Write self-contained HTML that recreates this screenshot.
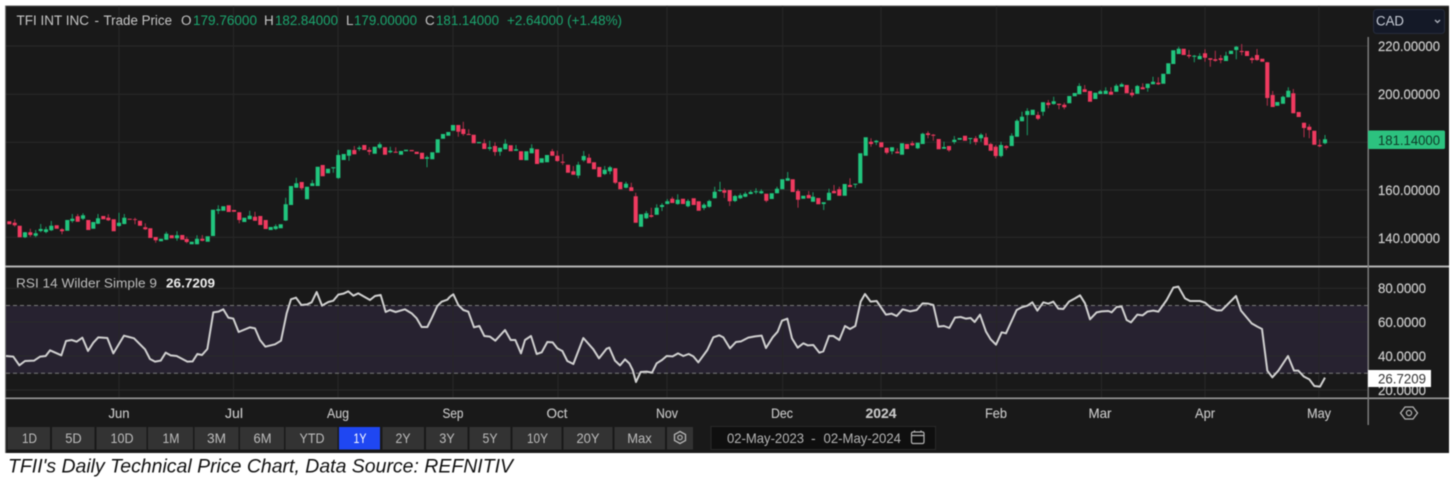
<!DOCTYPE html>
<html><head><meta charset="utf-8"><title>TFII Daily Technical Price Chart</title>
<style>
html,body{margin:0;padding:0;background:#fff;width:1454px;height:482px;overflow:hidden}
svg{display:block;filter:blur(.45px)}
text{font-family:"Liberation Sans",sans-serif}
.ax{font-size:13.5px;fill:#cfcfcf;stroke:#cfcfcf;stroke-width:.15px}
.xl{font-size:14px;fill:#c8c8c8;text-anchor:middle;stroke:#c8c8c8;stroke-width:.12px}
.bt{font-size:14px;fill:#bcbcbc;text-anchor:middle}
.g{fill:#1ba66f}.l{fill:#c6c6c6}
</style></head><body>
<svg width="1454" height="482" viewBox="0 0 1454 482" xmlns="http://www.w3.org/2000/svg">
<rect width="1454" height="482" fill="#fff"/>
<rect x="5" y="5.5" width="1444" height="447.5" fill="#191919"/>
<rect x="5" y="5.5" width="1444" height="1" fill="#555"/>
<rect x="5" y="5.5" width="1" height="447.5" fill="#777"/>

<!-- RSI band -->
<rect x="6" y="305.5" width="1362" height="68" fill="#272230"/>

<!-- grid -->
<path d="M6 46H1368M6 94.3H1368M6 142.3H1368M6 190H1368M6 237.3H1368M6 288.3H1368M6 322H1368M6 356H1368M6 390H1368" stroke="#2a2a2a" stroke-width="1" fill="none"/>
<path d="M119 6V398M233.5 6V398M338 6V398M453 6V398M558 6V398M667 6V398M782.7 6V398M881 6V398M996.6 6V398M1101.5 6V398M1205 6V398M1318.8 6V398" stroke="#272727" stroke-width="1" fill="none"/>
<path d="M6 305.5H1368M6 373.3H1368" stroke="#7a7a7a" stroke-width="1" stroke-dasharray="4 3" fill="none"/>

<!-- wicks -->
<path fill="none" stroke="#1b9c66" stroke-width="1" d="M35.7 230V237.3M40.7 224V232.3M46 226.7V233.3M51.3 221V231M25 232V238M72.3 214V222.7M83 213.3V220M98 214V224M119 212.7V226.7M124.3 214V224.3M166.3 231.7V240M177 231.3V240.7M197 235.3V244.3M218.3 205.3V214M249.7 210.7V219.3M275.7 224.3V230M285.7 197.7V221M296.3 177.7V187.7M312.3 180V186M333.3 167.3V172.7M338.3 150V179M349 149.7V160.7M359.3 145.7V151M379.7 142.3V149M390.3 146.7V153.3M427 155.7V167.3M489.7 140.7V150.7M500 147.7V155.7M505.3 139.3V149.3M516 145V150.7M531.7 144.3V153.3M578.3 161.7V178.3M583.7 151V161.7M604.7 166V175M610 166V174.3M626 181.7V188.3M646.3 211V219M656.7 204.3V214.7M662 203.3V211M667.3 199V204.3M677.7 194.3V204.7M688 199.3V207.3M704 203.3V210M709.3 199.7V207.7M714.7 186.7V198.3M720 181.7V191.7M735 195V202M740.3 193.3V199M745.3 191.7V197.3M750.7 190.3V194.3M756 188.3V194M761.3 189.3V194M777 186.7V193.3M787.7 172V180.7M813 192.3V201.7M823.7 202.3V210M829 188.7V200.3M855.3 183.7V188M876.3 140V145M892 147.3V154.3M917.7 142.7V149M922.7 132.7V144M944 141.7V148.7M954.3 136V144M970.3 138V144M981 133.3V141.7M1001 141.7V157.3M1011.7 133.3V146M1017 119.3V136.7M1022 111.7V121.3M1027.3 108.3V135.3M1043 102.3V115.7M1053.7 96.7V104.7M1079.3 83.3V94.3M1100.3 90V94M1105.7 87.3V94M1116.3 84V91.7M1121.7 82.7V86.7M1137.3 85V93.7M1147.7 83.7V91.7M1153 76.7V84.3M1178.7 46.7V54M1194.3 55V62.3M1199.7 53.3V59.3M1226 51.7V61M1236.3 46V59.3M1283 95.7V103.7M1288.3 87.3V97.3M1325 135V144.3"/>
<path fill="none" stroke="#b32f4c" stroke-width="1" d="M14.7 219.3V226.7M30.3 228.7V236.7M62 228.3V234.3M77.7 214V221.7M108.3 214.3V221M135 217.7V224.3M145.3 223.3V230M155.7 237V242.7M186.7 236.7V243.3M202.3 235V241.3M239.3 212.3V223.3M255 211.7V220.7M301.7 182V190M354.3 146V154.3M369.3 147.3V155M395.7 147.3V152.7M458.3 125V136.7M463.3 121.7V135.7M468.7 129.3V135M484.3 139.3V149M495 142.3V155.7M552.3 149V155.7M557.3 150.7V161.7M562.7 154V165M573.3 166V174.7M589 154V163.3M615.3 168.3V184M631.3 182.7V191M635.7 192.7V222.7M651.3 207.7V217.7M672.3 196.7V203M724.3 188.3V198M729.7 190V206M766.3 193.7V202.3M798 189.3V207.7M808.7 191V198.3M834 185V193.3M839.3 186.7V195.7M850 178.3V187M871 138.3V146.7M886.7 147.7V154.3M897.3 148.3V153.3M912.3 141V146M928 131.3V138.3M933.3 134V140.7M949 146V151.7M975.7 136V145M986 133.3V145.3M990.7 142.7V150.7M995.7 145V158.3M1006.3 145V150M1038 111.7V120M1048.3 100V108.3M1059 103.7V109.3M1064.3 102.7V109.3M1084.7 85V92M1111 87.3V94.7M1132 89.3V97.3M1142.7 83.3V89.3M1158.3 77.3V85M1189 50V58.3M1205 49.3V61.7M1210.3 58.3V66.7M1215.3 50.7V61.7M1220.7 55V63.3M1241.7 44V55.3M1252 56.7V63.3M1257 49V60.7M1267.3 62V105.7M1272.7 91V107M1293.3 89V113.3M1304 122.7V137.3M1309.3 124.3V138.3M1319.7 139.3V147.3"/>

<!-- green bodies -->
<path fill="none" stroke="#21c57e" stroke-width="4.1" d="M25 232.3V237.3M35.7 233.3V235.7M40.7 229V231M46 229.3V232M51.3 225.7V230.3M67.3 220V230.7M72.3 218.7V221M83 215.3V218.7M93.3 222V228.7M98 218.3V223.7M119 222.7V226M124.3 217.7V224M161 238.7V241.3M166.3 233.7V239.7M177 235.3V238.3M191.7 241.7V244.3M197 238.7V244.3M207.7 236.3V241.7M213 209.7V236M218.3 209.3V210.7M223.3 206.3V210.7M244.3 217.7V222M249.7 215.7V219.3M270.7 227V230M275.7 226.3V229M280.7 224.3V228.3M285.7 204.3V220.5M291 186V205M296.3 183.3V187.7M307 186.7V199.3M312.3 183.3V186M317.7 166.7V186M328 168.7V173.3M333.3 167.3V168.3M338.3 155V178M343.7 154V160M349 149.7V155.7M359.3 147.7V149M374.7 146.7V153.7M379.7 144.3V147.7M390.3 150.7V152.3M401 151V154.7M406 149.7V151.3M427 157.3V158.7M432.3 152.3V159.3M437.7 139.3V152.7M443 134V138.7M448.3 132V135.7M453 125V130.7M479 142V143.3M489.7 147.3V148.7M500 147.7V151.7M505.3 143.7V149.3M516 149.3V150.7M526.3 151.3V160.3M531.7 148.3V153.3M541.7 158.3V162.7M547 155V162.3M578.3 164.7V175.5M583.7 156V160.3M604.7 169.7V174M610 167.3V171.3M626 183.7V187.7M641 214.3V226.7M646.3 213.3V218.3M656.7 207.7V214.7M662 205V207M667.3 201.3V204M677.7 199.7V204M688 201V206.3M704 204.7V208M709.3 201V206.7M714.7 191.7V198.3M720 190V191M735 196V201M740.3 195.3V198.3M745.3 193.7V196.7M750.7 192V194M756 191.3V192.3M761.3 191.3V193.3M771.7 193.3V199M777 188.7V193.3M782.3 179.3V189.3M787.7 178.3V180.7M803.3 195.7V198.7M813 196.7V201.7M823.7 202.3V204M829 192.7V200.3M844.7 184V195.7M855.3 183.7V184.7M860.3 153.3V183.3M865.7 137.3V155.8M876.3 140.7V142.3M892 147.3V151.3M902 143.3V154.7M917.7 142.7V148.3M922.7 133.7V144M944 147V148.7M954.3 139.7V142M959.7 138V139.7M970.3 138V139M981 134.7V138.3M1001 145V156M1011.7 135.7V146M1017 120.7V136.7M1022 116.7V121.3M1027.3 111V115M1032.7 109.7V115M1043 102.3V111.7M1053.7 101.3V104M1069.3 96V103.3M1074.7 93V96.3M1079.3 86V94.3M1095.3 92.7V99M1100.3 91.3V94M1105.7 90.7V94M1116.3 85.7V91.7M1121.7 84.3V86.7M1137.3 86V93.7M1147.7 83.7V88M1153 81.7V84.3M1163.3 73.7V83.7M1168.3 63.3V74M1173.3 50.3V64M1178.7 48.7V54M1194.3 55.7V56.7M1199.7 56V59.3M1226 55.7V61M1231 50.7V54M1236.3 46.7V50M1277.3 102V105.7M1283 96.7V103.7M1288.3 90.7V97.3M1325 139.3V143.3"/>

<!-- red bodies -->
<path fill="none" stroke="#f03a60" stroke-width="4.1" d="M9.3 221.3V224.3M14.7 222.7V225.3M19.7 225.7V237.3M30.3 232.3V235M56.7 225.3V228.7M62 229.3V231.3M77.7 216.3V221.7M88.3 220V230M103.3 216V219.3M108.3 217.7V220.3M113.7 219.3V231.3M129.7 218.7V219.7M135 219.3V220M140 220.7V225.7M145.3 227.3V229.3M150.3 228.3V238M155.7 237V240.3M171.7 235.3V238.3M182.3 235V239.7M186.7 239V242M202.3 238.7V240.7M228.7 205.3V212M234 210V211.7M239.3 212.3V220M255 216.7V220.7M260.3 216V225M265.7 220V229M301.7 182V188.3M322.7 165V176.3M354.3 150V154.3M364.3 145V150M369.3 150V151.7M385 147.3V154.7M395.7 151.7V152.7M411.7 150V151.3M416.7 151.7V154M422 152.7V159M458.3 125V131.7M463.3 129V134M468.7 134V135M473.7 134.7V143.3M484.3 143.3V149M495 146V152M510.7 145.3V151.3M521 151.3V160M537 149.3V164M552.3 151.3V155.7M557.3 155.7V161M562.7 161.7V162.7M568 164.7V172.7M573.3 171.3V174.7M589 157.7V163.3M594 162.3V169.3M599.3 167V177M615.3 168.3V182.7M620.3 182V189.3M631.3 187.3V191M635.7 196.3V222.7M651.3 215.3V216.7M672.3 198.7V203M683 198.7V204M693.7 198.3V205M698.7 201.3V210.7M724.3 190.3V192.7M729.7 190V201.3M766.3 193.7V200.7M792.7 179.3V192M798 191V199.7M808.7 195V198.3M818.3 198V204.3M834 191V193.3M839.3 189.3V195.7M850 185V187M871 141.7V144M881.3 142.3V147.3M886.7 147.7V152.7M897.3 151.7V153.3M907 144V149M912.3 143.3V145.3M928 133.3V135M933.3 134.7V135.7M938.7 139V149.3M949 146V150.3M965 135.7V140.7M975.7 138.3V142M986 137.3V145.3M990.7 144V150.7M995.7 146.7V156M1006.3 146V148M1038 115V118.7M1048.3 102.7V105M1059 103.7V105M1064.3 104.7V107.3M1084.7 89.3V92M1090 91V101.7M1111 91.7V94.7M1126.7 85V93.3M1132 92.7V95.3M1142.7 87.3V89.3M1158.3 82.7V84.3M1183.7 48.7V55M1189 55V56.3M1205 53.3V57.7M1210.3 58.3V59.7M1215.3 59.3V60.7M1220.7 58.3V60M1241.7 51V52M1247 51V56M1252 58.3V60M1257 55V60M1262.3 58.7V61.7M1267.3 62.3V98M1272.7 95V107M1293.3 93.3V113.3M1298.7 112V117M1304 122.7V128M1309.3 126.7V130M1314.3 130.7V144.7M1319.7 145V146.3"/>

<!-- separators -->
<rect x="5" y="265.5" width="1444" height="2" fill="#b4b4b4"/>
<rect x="5" y="397.5" width="1363" height="1.6" fill="#9a9a9a"/>
<rect x="1368" y="397.5" width="81" height="1.6" fill="#9a9a9a"/>
<rect x="1367.5" y="37" width="1.4" height="388" fill="#808080"/>

<!-- RSI line -->
<g fill="none" stroke="#d0d0d0" stroke-width="6" stroke-linejoin="round">
<polyline transform="translate(0 280) scale(.33333)" points="18,228 40,230 58,256 75,243 102,242 120,230 137,228 150,211 184,226 198,183 215,180 230,185 247,173 264,213 280,188 295,172 322,174 340,220 372,167 402,175 435,208 450,237 465,245 482,242 497,218 512,226 530,228 562,245 578,244 592,222 606,225 622,207 640,97 655,95 670,88 685,113 700,116 716,156 750,142 765,145 780,180 796,200 825,193 843,182 860,100 873,58 888,53 904,75 922,73 935,67 950,36 966,77 985,66 1000,62 1015,44 1030,41 1045,34 1060,47 1075,40 1110,60 1125,48 1142,45 1157,96 1170,90 1187,96 1215,88 1235,100 1250,115 1265,141 1282,141 1295,115 1312,78 1325,65 1342,59 1350,50"/>
<polyline transform="translate(450 280) scale(.33333)" points="0,50 10,43 25,75 40,90 55,95 72,142 88,138 103,168 120,170 136,182 165,150 182,180 196,180 213,220 225,180 243,168 260,222 275,217 292,186 308,187 322,205 337,213 352,243 370,252 400,174 430,208 447,235 470,206 478,203 495,242 510,256 525,238 538,250 548,270 558,306 572,276 590,275 606,278 620,250 636,240 650,228 668,229 684,220 700,228 716,222 730,229 745,247 772,210 790,172 808,166 820,172 840,205 858,186 873,184 895,173 915,169 935,167 948,204 968,172 983,155 996,122 1012,116 1026,175 1043,203 1060,190 1073,196 1090,195 1108,218 1120,214 1137,168 1150,168 1168,180 1185,138 1200,147 1216,138 1232,65 1245,42 1262,65 1280,63 1308,104 1325,101 1340,108 1350,97"/>
<polyline transform="translate(900 280) scale(.33333)" points="0,97 8,88 30,94 50,90 68,70 85,71 100,75 115,140 132,138 148,144 165,113 182,111 198,116 212,114 224,126 240,104 258,155 272,178 288,194 305,157 318,160 350,90 365,82 382,77 397,67 412,92 430,67 445,71 460,65 475,86 490,87 507,65 525,55 540,46 555,70 570,118 590,97 605,94 625,93 635,97 650,81 665,80 680,120 693,127 712,104 728,106 742,95 760,92 775,95 800,60 820,23 835,20 855,55 870,63 900,63 915,68 935,85 950,91 965,91 1008,48 1023,92 1055,130 1072,140 1086,147 1102,272 1117,292 1135,272 1164,228 1182,272 1195,272 1212,290 1228,298 1243,318 1260,320 1275,293"/>
</g>

<!-- header -->
<g font-size="13.5">
<text x="16.5" y="25" class="l" textLength="72.5" lengthAdjust="spacingAndGlyphs">TFI INT INC</text>
<text x="94.5" y="25" class="l">-</text>
<text x="103.5" y="25" class="l" textLength="68.5" lengthAdjust="spacingAndGlyphs">Trade Price</text>
<text x="181" y="25" class="l">O</text>
<text x="193" y="25" class="g" textLength="64" lengthAdjust="spacingAndGlyphs">179.76000</text>
<text x="264" y="25" class="l">H</text>
<text x="275" y="25" class="g" textLength="63" lengthAdjust="spacingAndGlyphs">182.84000</text>
<text x="346" y="25" class="l">L</text>
<text x="354" y="25" class="g" textLength="63" lengthAdjust="spacingAndGlyphs">179.00000</text>
<text x="425" y="25" class="l">C</text>
<text x="436" y="25" class="g" textLength="63" lengthAdjust="spacingAndGlyphs">181.14000</text>
<text x="507" y="25" class="g" textLength="115" lengthAdjust="spacingAndGlyphs">+2.64000 (+1.48%)</text>
</g>
<text x="16" y="287.5" font-size="13" fill="#bdbdbd" textLength="141" lengthAdjust="spacingAndGlyphs">RSI 14 Wilder Simple 9</text>
<text x="166" y="287.5" font-size="13" fill="#eee" font-weight="bold" textLength="49" lengthAdjust="spacingAndGlyphs">26.7209</text>

<!-- CAD -->
<rect x="1373.5" y="9.5" width="71" height="24" rx="3" fill="#141927" stroke="#262c3c"/>
<text x="1376" y="25.5" font-size="13.5" fill="#c9ced8" textLength="28" lengthAdjust="spacingAndGlyphs">CAD</text>
<path d="M1435 20l2.5 2.5 2.5-2.5" stroke="#b0b5c0" stroke-width="1.3" fill="none"/>

<!-- price axis -->
<text class="ax" x="1378" y="51" textLength="62" lengthAdjust="spacingAndGlyphs">220.00000</text>
<text class="ax" x="1378" y="99" textLength="62" lengthAdjust="spacingAndGlyphs">200.00000</text>
<text class="ax" x="1378" y="195" textLength="62" lengthAdjust="spacingAndGlyphs">160.00000</text>
<text class="ax" x="1378" y="243" textLength="62" lengthAdjust="spacingAndGlyphs">140.00000</text>
<rect x="1368" y="130.5" width="77" height="18.5" rx="1.5" fill="#2cc27f"/>
<text x="1378" y="145" font-size="13.5" fill="#0f3a28" textLength="62" lengthAdjust="spacingAndGlyphs">181.14000</text>

<!-- rsi axis -->
<text class="ax" x="1378" y="293" textLength="48" lengthAdjust="spacingAndGlyphs">80.0000</text>
<text class="ax" x="1378" y="327" textLength="48" lengthAdjust="spacingAndGlyphs">60.0000</text>
<text class="ax" x="1378" y="361" textLength="48" lengthAdjust="spacingAndGlyphs">40.0000</text>
<text class="ax" x="1378" y="395" textLength="48" lengthAdjust="spacingAndGlyphs">20.0000</text>
<rect x="1368" y="370" width="63" height="17" fill="#fff"/>
<text x="1378" y="383.5" font-size="13.5" fill="#333" textLength="48" lengthAdjust="spacingAndGlyphs">26.7209</text>

<!-- x axis -->
<text class="xl" x="119" y="418" textLength="21" lengthAdjust="spacingAndGlyphs">Jun</text>
<text class="xl" x="234" y="418" textLength="18" lengthAdjust="spacingAndGlyphs">Jul</text>
<text class="xl" x="338" y="418" textLength="22" lengthAdjust="spacingAndGlyphs">Aug</text>
<text class="xl" x="453" y="418" textLength="21" lengthAdjust="spacingAndGlyphs">Sep</text>
<text class="xl" x="557" y="418" textLength="21" lengthAdjust="spacingAndGlyphs">Oct</text>
<text class="xl" x="667" y="418" textLength="22" lengthAdjust="spacingAndGlyphs">Nov</text>
<text class="xl" x="782" y="418" textLength="22" lengthAdjust="spacingAndGlyphs">Dec</text>
<text class="xl" x="881" y="418" font-weight="bold" textLength="31" lengthAdjust="spacingAndGlyphs">2024</text>
<text class="xl" x="996" y="418" textLength="22" lengthAdjust="spacingAndGlyphs">Feb</text>
<text class="xl" x="1100" y="418" textLength="23" lengthAdjust="spacingAndGlyphs">Mar</text>
<text class="xl" x="1205" y="418" textLength="20" lengthAdjust="spacingAndGlyphs">Apr</text>
<text class="xl" x="1319" y="418" textLength="24" lengthAdjust="spacingAndGlyphs">May</text>
<path d="M1400.5 413L1405 407H1413L1417.5 413L1413 419H1405Z" fill="none" stroke="#b5b5b5" stroke-width="1.3"/>
<circle cx="1409" cy="413" r="2.6" fill="none" stroke="#b5b5b5" stroke-width="1.2"/>

<!-- range buttons -->
<g fill="#333">
<rect x="7.5" y="427" width="42.5" height="22.5"/>
<rect x="52" y="427" width="42.5" height="22.5"/>
<rect x="96.5" y="427" width="50" height="22.5"/>
<rect x="148" y="427" width="45" height="22.5"/>
<rect x="194.5" y="427" width="44" height="22.5"/>
<rect x="240" y="427" width="44" height="22.5"/>
<rect x="285.5" y="427" width="52" height="22.5"/>
<rect x="339" y="427" width="41" height="22.5" fill="#1f47f2"/>
<rect x="382.5" y="427" width="41.5" height="22.5"/>
<rect x="426" y="427" width="41.5" height="22.5"/>
<rect x="469.5" y="427" width="41" height="22.5"/>
<rect x="512.5" y="427" width="49" height="22.5"/>
<rect x="563.5" y="427" width="49" height="22.5"/>
<rect x="614.5" y="427" width="50.5" height="22.5"/>
<rect x="667" y="427" width="26" height="22.5"/>
</g>
<text class="bt" x="29.5" y="443" textLength="15" lengthAdjust="spacingAndGlyphs">1D</text>
<text class="bt" x="73.5" y="443" textLength="16.5" lengthAdjust="spacingAndGlyphs">5D</text>
<text class="bt" x="122" y="443" textLength="23" lengthAdjust="spacingAndGlyphs">10D</text>
<text class="bt" x="171" y="443" textLength="17" lengthAdjust="spacingAndGlyphs">1M</text>
<text class="bt" x="216.5" y="443" textLength="19" lengthAdjust="spacingAndGlyphs">3M</text>
<text class="bt" x="262.5" y="443" textLength="18" lengthAdjust="spacingAndGlyphs">6M</text>
<text class="bt" x="312" y="443" textLength="25" lengthAdjust="spacingAndGlyphs">YTD</text>
<text class="bt" x="360" y="443" style="fill:#fff" textLength="13" lengthAdjust="spacingAndGlyphs">1Y</text>
<text class="bt" x="403" y="443" textLength="15" lengthAdjust="spacingAndGlyphs">2Y</text>
<text class="bt" x="447" y="443" textLength="15.6" lengthAdjust="spacingAndGlyphs">3Y</text>
<text class="bt" x="490" y="443" textLength="15" lengthAdjust="spacingAndGlyphs">5Y</text>
<text class="bt" x="537.5" y="443" textLength="21" lengthAdjust="spacingAndGlyphs">10Y</text>
<text class="bt" x="588" y="443" textLength="23" lengthAdjust="spacingAndGlyphs">20Y</text>
<text class="bt" x="639.5" y="443" textLength="24.5" lengthAdjust="spacingAndGlyphs">Max</text>
<path d="M680 431.5L685.5 434.5V440.5L680 443.5L674.5 440.5V434.5Z" fill="none" stroke="#b5b5b5" stroke-width="1.3"/>
<circle cx="680" cy="437.5" r="2.2" fill="none" stroke="#b5b5b5" stroke-width="1.2"/>

<!-- date box -->
<rect x="711" y="426.5" width="224.5" height="23" fill="#0f0f0f" stroke="#292929"/>
<text x="727" y="443" font-size="14" fill="#b5b5b5" textLength="77" lengthAdjust="spacingAndGlyphs">02-May-2023</text>
<text x="811" y="443" font-size="14" fill="#b5b5b5">-</text>
<text x="823.5" y="443" font-size="14" fill="#b5b5b5" textLength="77.5" lengthAdjust="spacingAndGlyphs">02-May-2024</text>
<rect x="911.5" y="432" width="12.5" height="11.5" rx="1.5" fill="none" stroke="#b5b5b5" stroke-width="1.2"/>
<path d="M911.5 435.5H924M914.5 430.5V432.5M921 430.5V432.5" stroke="#b5b5b5" stroke-width="1.2" fill="none"/>

<!-- caption -->
<text x="8" y="472.5" font-size="19" font-style="italic" fill="#111" textLength="505" lengthAdjust="spacingAndGlyphs">TFII's Daily Technical Price Chart, Data Source: REFNITIV</text>
</svg>
</body></html>
